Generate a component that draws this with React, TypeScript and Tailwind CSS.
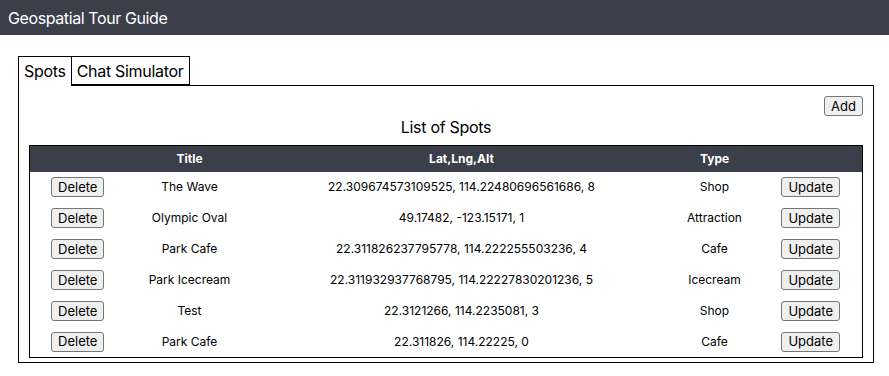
import React from "react";

// ── Types ──────────────────────────────────────────────────────────────────
type Spot = {
  title: string;
  coords: string;
  type: string;
};

// ── Data ───────────────────────────────────────────────────────────────────
const spots: Spot[] = [
  { title: "The Wave", coords: "22.309674573109525, 114.22480696561686, 8", type: "Shop" },
  { title: "Olympic Oval", coords: "49.17482, -123.15171, 1", type: "Attraction" },
  { title: "Park Cafe", coords: "22.311826237795778, 114.222255503236, 4", type: "Cafe" },
  { title: "Park Icecream", coords: "22.311932937768795, 114.22227830201236, 5", type: "Icecream" },
  { title: "Test", coords: "22.3121266, 114.2235081, 3", type: "Shop" },
  { title: "Park Cafe", coords: "22.311826, 114.22225, 0", type: "Cafe" },
];

const btn =
  "h-[20px] px-[6px] text-[13px] leading-none text-black bg-[#efefef] border border-[#767676] rounded-[3px]";

// ── Component ──────────────────────────────────────────────────────────────
export default function App() {
  return (
    <div className="min-h-screen bg-white text-black font-['Inter',sans-serif]">
      {/* ── HEADER ── */}
      <header className="h-[35px] bg-[#3a3f4a] flex items-center px-[8px]">
        <span className="text-white text-[16px] tracking-[-0.4px]">Geospatial Tour Guide</span>
      </header>

      <div className="ml-[18px] mr-[15px] mt-[21px]">
        {/* ── TABS ── */}
        <div className="flex text-[16px] tracking-[-0.3px]">
          <div className="h-[30px] px-[5px] flex items-center border border-black border-b-0 bg-white relative z-10 -mb-px pb-px">
            Spots
          </div>
          <div className="h-[29px] px-[5px] flex items-center border border-black border-l-0">
            Chat Simulator
          </div>
        </div>

        {/* ── PANEL ── */}
        <div className="border border-black px-[10px] pt-[10px] pb-[4px]">
          <div className="flex justify-end">
            <button className={btn}>Add</button>
          </div>
          <h2 className="text-center text-[16px] tracking-[-0.3px] mt-[1px] mb-[8px] leading-[20px]">
            List of Spots
          </h2>

          <table className="w-full border-collapse border border-black text-[12px]">
            <thead>
              <tr className="bg-[#3a3f4a] text-white h-[26px]">
                <th className="w-[96px]"></th>
                <th className="w-[128px] font-bold">Title</th>
                <th className="w-[416px] font-bold">Lat,Lng,Alt</th>
                <th className="w-[90px] font-bold">Type</th>
                <th></th>
              </tr>
            </thead>
            <tbody>
              {spots.map((s, i) => (
                <tr key={i} className="h-[31px] text-center">
                  <td>
                    <button className={btn}>Delete</button>
                  </td>
                  <td>{s.title}</td>
                  <td>{s.coords}</td>
                  <td>{s.type}</td>
                  <td>
                    <button className={btn}>Update</button>
                  </td>
                </tr>
              ))}
            </tbody>
          </table>
        </div>
      </div>
    </div>
  );
}
